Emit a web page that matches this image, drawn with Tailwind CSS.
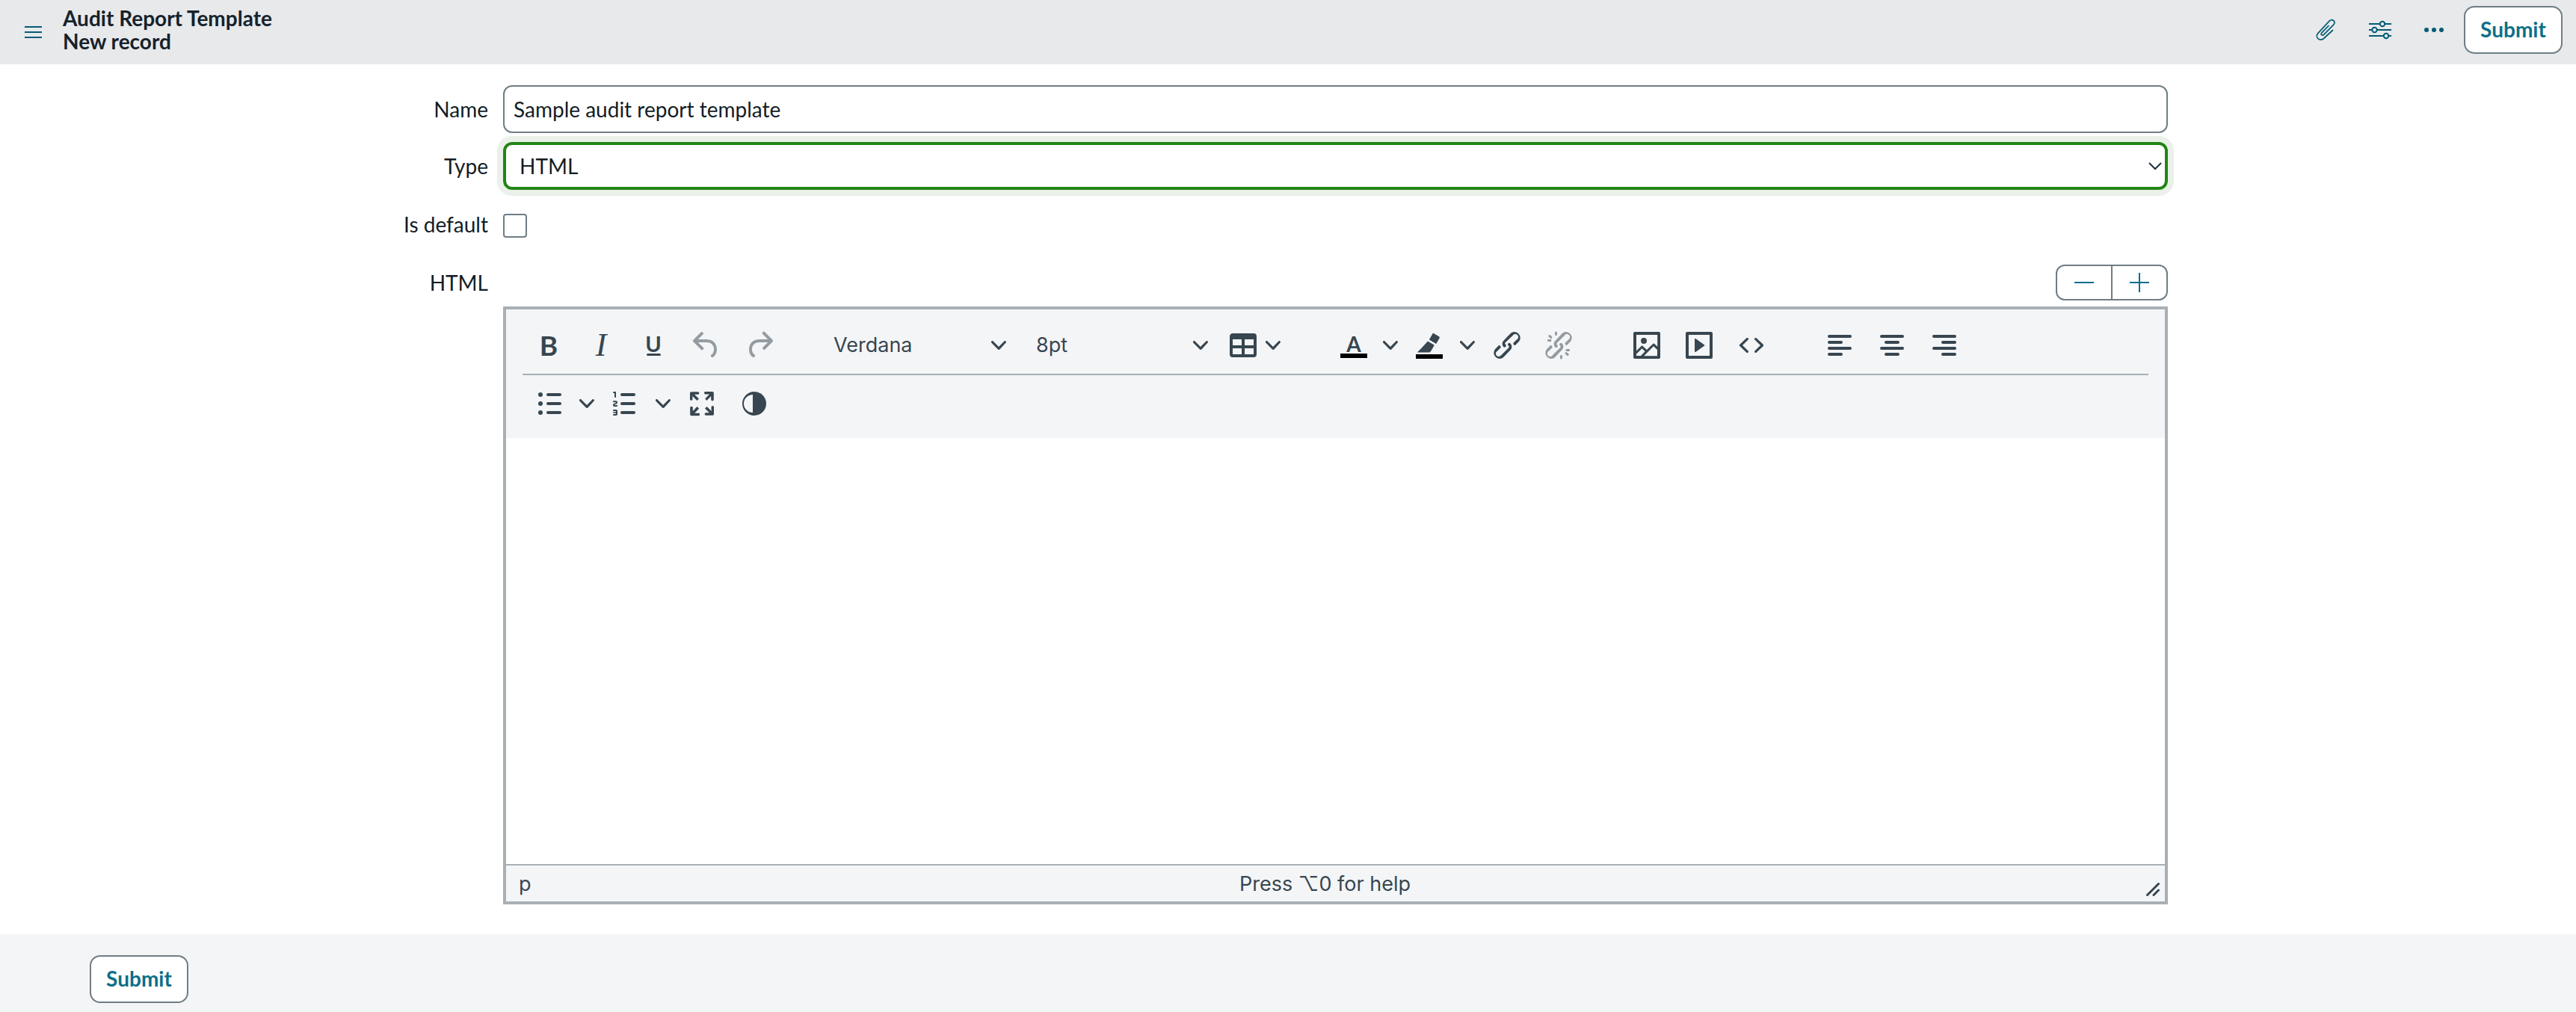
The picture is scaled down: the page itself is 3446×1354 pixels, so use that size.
<!DOCTYPE html>
<html lang="en">
<head>
  <meta charset="UTF-8" />
  <title>Audit Report Template - New record</title>
  <script src="https://cdn.jsdelivr.net/npm/@tailwindcss/browser@4"></script>
</head>
<body class="h-[1354px] overflow-hidden bg-white font-['Lato',sans-serif] text-[28px] leading-[40px] text-[#131d25] flex flex-col">

  <!-- header -->
  <header class="h-[86px] shrink-0 bg-[#e7e9eb] flex items-center">
    <svg class="ml-[33px] w-[23px] h-[16px] text-[#045c75]" viewBox="0 0 23 16" fill="currentColor"><rect y="0" width="23" height="2"/><rect y="7" width="23" height="2"/><rect y="14" width="23" height="2"/></svg>
    <div class="ml-[28px] font-bold text-[28px] leading-[31px] -mt-[7px] text-[#16222b]">
      <div>Audit Report Template</div>
      <div>New record</div>
    </div>
    <div class="ml-auto -mt-[7px] flex items-center text-[#045c75]">
      <svg class="w-[26px] h-[30px]" viewBox="0 0 26 30" fill="none" stroke="currentColor" stroke-width="1.7" stroke-linecap="round"><path d="M22.5 15.5 10.5 26.5c-2.5 2-5.7 2-7.7.2-2-2-2-5 .2-7.3L18 3.2c1.8-1.8 4.2-2 5.8-.6 1.5 1.6 1.3 4-.4 5.8L10.6 21.3c-1 1-2.2 1.1-3 .3-.7-.8-.5-2 .5-3L17 9.5"/></svg>
      <svg class="ml-[45px] w-[30px] h-[26px]" viewBox="0 0 30 26" fill="none" stroke="currentColor" stroke-width="2"><path d="M0 5h30M0 13h30M0 21h30"/><circle cx="18" cy="5" r="3.2" fill="#e7e9eb"/><circle cx="7.5" cy="13" r="3.2" fill="#e7e9eb"/><circle cx="23" cy="21" r="3.2" fill="#e7e9eb"/></svg>
      <svg class="ml-[44px] w-[26px] h-[8px]" viewBox="0 0 26 8" fill="currentColor"><circle cx="3" cy="4" r="3"/><circle cx="13" cy="4" r="3"/><circle cx="23" cy="4" r="3"/></svg>
      <button class="ml-[27px] mr-[18px] w-[132px] h-[64px] pb-[2px] rounded-[14px] border-2 border-[#6f7d85] bg-white font-bold text-[#0c6f88]">Submit</button>
    </div>
  </header>

  <!-- form -->
  <main class="flex-1 pt-[28px]">
    <div class="flex items-center h-[64px]">
      <label class="w-[653px] text-right">Name</label>
      <div class="ml-[20px] w-[2227px] h-[64px] rounded-[12px] border-2 border-[#6f7d85] pl-[12px] flex items-center">Sample audit report template</div>
    </div>
    <div class="flex items-center h-[64px] mt-[12px]">
      <label class="w-[653px] text-right">Type</label>
      <div class="ml-[20px] w-[2227px] h-[64px] rounded-[12px] border-4 border-[#228514] ring-8 ring-[#e9f1e8] pl-[18px] pr-[4px] flex items-center justify-between">
        HTML
        <svg class="w-[18px] h-[11px]" viewBox="0 0 18 11" fill="none" stroke="#22303a" stroke-width="2"><path d="M1 1l8 8 8-8"/></svg>
      </div>
    </div>
    <div class="flex items-center h-[32px] mt-[32px]">
      <label class="w-[653px] text-right -mt-[5px]">Is default</label>
      <div class="ml-[20px] w-[32px] h-[32px] rounded-[4px] border-2 border-[#6f7d85]"></div>
    </div>
    <div class="flex items-center h-[48px] mt-[36px]">
      <label class="w-[653px] text-right">HTML</label>
      <div class="ml-auto mr-[546px] w-[150px] h-[48px] rounded-[12px] border-2 border-[#6f7d85] flex text-[#006e8a]">
        <div class="flex-1 flex items-center justify-center border-r-2 border-[#6f7d85]">
          <svg class="w-[26px] h-[2px]" viewBox="0 0 26 2" fill="currentColor"><rect width="26" height="2"/></svg>
        </div>
        <div class="flex-1 flex items-center justify-center">
          <svg class="w-[26px] h-[26px]" viewBox="0 0 26 26" fill="currentColor"><rect y="12" width="26" height="2"/><rect x="12" width="2" height="26"/></svg>
        </div>
      </div>
    </div>

    <!-- editor -->
    <div class="ml-[673px] mt-[8px] w-[2227px] h-[800px] border-4 border-[#a8b0b5] flex flex-col text-[#374650]">
      <div class="bg-[#f4f5f7] h-[172px] shrink-0 px-[22px]">
        <div class="h-[88px] pt-[10px] border-b-2 border-[#a8b0b5] flex items-center fill-[#374650]">
          <div class="w-[70px] text-center font-bold text-[37px]">B</div>
          <div class="w-[70px] text-center italic font-['Liberation_Serif',serif] text-[44px]">I</div>
          <div class="w-[70px] flex flex-col items-center -mt-[2px]">
            <span class="text-[29px] leading-[26px] font-bold">U</span>
            <span class="w-[19px] h-[3px] bg-[#374650] rounded-sm"></span>
          </div>
          <svg class="w-[48px] h-[48px] ml-[12px] opacity-50" viewBox="0 0 24 24"><path d="M6.4 8H12c3.7 0 6.2 2 6.8 5.1.6 2.7-.4 5.6-2.3 6.8a1 1 0 01-1-1.8c1.1-.6 1.8-2.7 1.4-4.6-.5-2.1-2.1-3.5-4.9-3.5H6.4l3.3 3.3a1 1 0 11-1.4 1.4l-5-5a1 1 0 010-1.4l5-5a1 1 0 011.4 1.4L6.4 8z"/></svg>
          <svg class="w-[48px] h-[48px] ml-[23px] opacity-50" viewBox="0 0 24 24"><path d="M17.6 10H12c-2.8 0-4.4 1.4-4.9 3.5-.4 2 .3 4 1.4 4.6a1 1 0 11-1 1.8c-2-1.2-2.9-4.1-2.3-6.8.6-3 3-5.1 6.8-5.1h5.6l-3.3-3.3a1 1 0 111.4-1.4l5 5a1 1 0 010 1.4l-5 5a1 1 0 01-1.4-1.4l3.3-3.3z"/></svg>
          <div class="w-[211px] ml-[75px] font-['Inter',sans-serif] text-[27px]">Verdana</div>
          <svg class="w-[20px] h-[20px]" viewBox="0 0 10 10"><path d="M8.7 2.2c.3-.3.8-.3 1 0 .4.4.4.9 0 1.2L5.7 7.8c-.3.3-.9.3-1.2 0L.2 3.4a.8.8 0 010-1.2c.3-.3.8-.3 1.1 0L5 6l3.7-3.8z"/></svg>
          <div class="w-[209px] ml-[40px] font-['Inter',sans-serif] text-[27px]">8pt</div>
          <svg class="w-[20px] h-[20px] ml-[1px]" viewBox="0 0 10 10"><path d="M8.7 2.2c.3-.3.8-.3 1 0 .4.4.4.9 0 1.2L5.7 7.8c-.3.3-.9.3-1.2 0L.2 3.4a.8.8 0 010-1.2c.3-.3.8-.3 1.1 0L5 6l3.7-3.8z"/></svg>
          <svg class="w-[48px] h-[48px] ml-[23px]" viewBox="0 0 24 24"><path d="M19 4a2 2 0 012 2v12a2 2 0 01-2 2H5a2 2 0 01-2-2V6c0-1.1.9-2 2-2h14zM5 14v4h6v-4H5zm14 0h-6v4h6v-4zm0-6h-6v4h6V8zM5 12h6V8H5v4z"/></svg>
          <svg class="w-[20px] h-[20px] ml-[6px]" viewBox="0 0 10 10"><path d="M8.7 2.2c.3-.3.8-.3 1 0 .4.4.4.9 0 1.2L5.7 7.8c-.3.3-.9.3-1.2 0L.2 3.4a.8.8 0 010-1.2c.3-.3.8-.3 1.1 0L5 6l3.7-3.8z"/></svg>
          <div class="w-[36px] ml-[80px] flex flex-col items-center mt-[2px]">
            <span class="font-bold text-[28px] leading-[26px]">A</span>
            <span class="w-[36px] h-[6px] bg-black"></span>
          </div>
          <svg class="w-[20px] h-[20px] ml-[21px]" viewBox="0 0 10 10"><path d="M8.7 2.2c.3-.3.8-.3 1 0 .4.4.4.9 0 1.2L5.7 7.8c-.3.3-.9.3-1.2 0L.2 3.4a.8.8 0 010-1.2c.3-.3.8-.3 1.1 0L5 6l3.7-3.8z"/></svg>
          <svg class="w-[48px] h-[48px] ml-[18px]" viewBox="0 0 24 24"><path d="M14.7 3.9l3.8 2.2c.4.2.5.7.3 1.1l-2.2 3.8-4.7-2.7 2.2-3.8c.2-.4.3-.7.6-.6zM11 9.3l4.4 2.6-2.2 3.9-1 .9-.6.1H4l.4-.5 2.5-2.5z"/><rect x="3" y="18" width="18" height="3" fill="#000"/></svg>
          <svg class="w-[20px] h-[20px] ml-[17px]" viewBox="0 0 10 10"><path d="M8.7 2.2c.3-.3.8-.3 1 0 .4.4.4.9 0 1.2L5.7 7.8c-.3.3-.9.3-1.2 0L.2 3.4a.8.8 0 010-1.2c.3-.3.8-.3 1.1 0L5 6l3.7-3.8z"/></svg>
          <svg class="w-[48px] h-[48px] ml-[19px]" viewBox="0 0 24 24"><path d="M6.2 12.3a1 1 0 011.4 1.4l-2 2a2 2 0 102.6 2.8l4.8-4.8a1 1 0 000-1.4 1 1 0 111.4-1.3 2.9 2.9 0 010 4L9.6 20a3.9 3.9 0 01-5.5-5.5l2-2zm11.6-.6a1 1 0 01-1.4-1.4l2-2a2 2 0 10-2.6-2.8L11 10a1 1 0 000 1.4A1 1 0 119.6 13a2.9 2.9 0 010-4L14.4 4a3.9 3.9 0 015.5 5.5l-2 2z"/></svg>
          <svg class="w-[48px] h-[48px] ml-[21px] opacity-50" viewBox="0 0 24 24"><path d="M6.2 12.3a1 1 0 011.4 1.4l-2.1 2a2 2 0 102.7 2.7l4.8-4.8a1 1 0 000-1.3 1 1 0 111.4-1.4 2.9 2.9 0 010 4L9.6 20a3.9 3.9 0 01-5.5-5.5l2-2zm11.6-.6a1 1 0 01-1.4-1.3l2.1-2.1a2 2 0 10-2.7-2.7l-4.8 4.8a1 1 0 000 1.3 1 1 0 11-1.4 1.4 2.9 2.9 0 010-4L14.4 4a3.9 3.9 0 015.5 5.5l-2 2zM7.6 6.3a.8.8 0 01-1 1.1L5.3 6.2a.8.8 0 011.1-1.1l1.2 1.2zM5 9.5a.8.8 0 010-1.5h1.7a.8.8 0 010 1.5H5zm11.4 8.2a.8.8 0 011-1.1l1.3 1.2a.8.8 0 01-1.1 1.1l-1.2-1.2zm2.6-3.2a.8.8 0 010 1.5h-1.7a.8.8 0 010-1.5H19zM9.5 5V3.3a.8.8 0 011.5 0V5a.8.8 0 01-1.5 0zm5 14v1.7a.8.8 0 01-1.5 0V19a.8.8 0 011.5 0z"/></svg>
          <svg class="w-[48px] h-[48px] ml-[70px]" viewBox="0 0 24 24"><path d="M5 15.7l3.3-3.2c.3-.3.7-.3 1 0L12 15l4.1-4c.3-.4.8-.4 1 0l2 1.9V5H5v10.7zM5 18V19h3l2.8-2.9-2-2L5 17.9zm14-3l-2.5-2.4-6.4 6.5H19v-4zM4 3h16c.6 0 1 .4 1 1v16c0 .6-.4 1-1 1H4a1 1 0 01-1-1V4c0-.6.4-1 1-1zm6 8a2 2 0 100-4 2 2 0 000 4z"/></svg>
          <svg class="w-[48px] h-[48px] ml-[22px]" viewBox="0 0 24 24"><path d="M4 3h16c.6 0 1 .4 1 1v16c0 .6-.4 1-1 1H4a1 1 0 01-1-1V4c0-.6.4-1 1-1zm1 2v14h14V5H5zm4.8 2.6l5.6 4a.5.5 0 010 .8l-5.6 4A.5.5 0 019 16V8a.5.5 0 01.8-.4z"/></svg>
          <svg class="w-[48px] h-[48px] ml-[22px]" viewBox="0 0 24 24"><path d="M9.8 15.7c.3.3.3.8 0 1-.3.4-.9.4-1.2 0l-4.4-4.1a.8.8 0 010-1.2l4.4-4.2c.3-.3.9-.3 1.2 0 .3.3.3.8 0 1.1L6 12l3.8 3.7zm4.4 0L18 12l-3.8-3.7c-.3-.3-.3-.8 0-1.1.3-.3.9-.3 1.2 0l4.4 4.2c.3.3.3.9 0 1.2l-4.4 4.1c-.3.4-.9.4-1.2 0a.8.8 0 010-1z"/></svg>
          <svg class="w-[48px] h-[48px] ml-[70px]" viewBox="0 0 24 24"><rect x="4" y="5" width="16" height="2" rx="1"/><rect x="4" y="9" width="10" height="2" rx="1"/><rect x="4" y="13" width="16" height="2" rx="1"/><rect x="4" y="17" width="10" height="2" rx="1"/></svg>
          <svg class="w-[48px] h-[48px] ml-[22px]" viewBox="0 0 24 24"><rect x="4" y="5" width="16" height="2" rx="1"/><rect x="7" y="9" width="10" height="2" rx="1"/><rect x="4" y="13" width="16" height="2" rx="1"/><rect x="7" y="17" width="10" height="2" rx="1"/></svg>
          <svg class="w-[48px] h-[48px] ml-[22px]" viewBox="0 0 24 24"><rect x="4" y="5" width="16" height="2" rx="1"/><rect x="10" y="9" width="10" height="2" rx="1"/><rect x="4" y="13" width="16" height="2" rx="1"/><rect x="10" y="17" width="10" height="2" rx="1"/></svg>
        </div>
        <div class="h-[82px] pb-[6px] flex items-center fill-[#374650]">
          <svg class="w-[48px] h-[48px] ml-[12px]" viewBox="0 0 24 24"><path d="M11 5h8c.6 0 1 .4 1 1s-.4 1-1 1h-8a1 1 0 010-2zm0 6h8c.6 0 1 .4 1 1s-.4 1-1 1h-8a1 1 0 010-2zm0 6h8c.6 0 1 .4 1 1s-.4 1-1 1h-8a1 1 0 010-2z"/><circle cx="6" cy="6" r="1.5"/><circle cx="6" cy="12" r="1.5"/><circle cx="6" cy="18" r="1.5"/></svg>
          <svg class="w-[20px] h-[20px] ml-[16px]" viewBox="0 0 10 10"><path d="M8.7 2.2c.3-.3.8-.3 1 0 .4.4.4.9 0 1.2L5.7 7.8c-.3.3-.9.3-1.2 0L.2 3.4a.8.8 0 010-1.2c.3-.3.8-.3 1.1 0L5 6l3.7-3.8z"/></svg>
          <svg class="w-[48px] h-[48px] ml-[17px]" viewBox="0 0 24 24"><path d="M10 17h8c.6 0 1 .4 1 1s-.4 1-1 1h-8a1 1 0 010-2zm0-6h8c.6 0 1 .4 1 1s-.4 1-1 1h-8a1 1 0 010-2zm0-6h8c.6 0 1 .4 1 1s-.4 1-1 1h-8a1 1 0 110-2zM6 4v3.5c0 .3-.2.5-.5.5a.5.5 0 01-.5-.5V5h-.5a.5.5 0 010-1H6zm-1 8.8l.2.2h1.3c.3 0 .5.2.5.5s-.2.5-.5.5H4.9a1 1 0 01-.9-1V13c0-.4.3-.8.6-1l1.2-.4.2-.3a.2.2 0 00-.2-.2H4.5a.5.5 0 01-.5-.5c0-.3.2-.5.5-.5h1.6c.5 0 .9.4.9 1v.1c0 .4-.3.8-.6 1l-1.2.4-.2.3zM7 17v2c0 .6-.4 1-1 1H4.5a.5.5 0 010-1h1.2c.2 0 .3-.1.3-.3 0-.2-.1-.3-.3-.3H4.4a.4.4 0 110-.8h1.3c.2 0 .3-.1.3-.3 0-.2-.1-.3-.3-.3H4.5a.5.5 0 110-1H6c.6 0 1 .4 1 1z"/></svg>
          <svg class="w-[20px] h-[20px] ml-[17px]" viewBox="0 0 10 10"><path d="M8.7 2.2c.3-.3.8-.3 1 0 .4.4.4.9 0 1.2L5.7 7.8c-.3.3-.9.3-1.2 0L.2 3.4a.8.8 0 010-1.2c.3-.3.8-.3 1.1 0L5 6l3.7-3.8z"/></svg>
          <svg class="w-[48px] h-[48px] ml-[18px]" viewBox="0 0 24 24"><path d="M15.3 10l-1.2-1.3 2.9-3h-2.3a.9.9 0 110-1.7H19c.5 0 .9.4.9.9v4.4a.9.9 0 11-1.8 0V7l-2.9 3zm0 4l3 3v-2.3a.9.9 0 111.7 0V19c0 .5-.4.9-.9.9h-4.4a.9.9 0 110-1.8H17l-3-2.9 1.3-1.2zM10 15.4l-2.9 3h2.3a.9.9 0 110 1.7H5a.9.9 0 01-.9-.9v-4.4a.9.9 0 111.8 0V17l2.9-3 1.2 1.3zM8.7 10L5.7 7v2.3a.9.9 0 01-1.7 0V5c0-.5.4-.9.9-.9h4.4a.9.9 0 010 1.8H7l3 2.9-1.3 1.2z"/></svg>
          <svg class="w-[48px] h-[48px] ml-[22px]" viewBox="0 0 24 24" fill-rule="evenodd"><path d="M12 4a8 8 0 1 0 0 16a8 8 0 0 0 0-16zM11 6a6 6 0 0 0 0 12z"/></svg>
        </div>
      </div>
      <div class="flex-1 bg-white"></div>
      <div class="relative h-[50px] shrink-0 bg-[#f4f5f7] border-t-2 border-[#a8b0b5] pl-[17px] pt-[2px] flex items-center font-['Inter',sans-serif] text-[27px]">
        <span>p</span>
        <span class="absolute left-[981px]">Press ⌥0 for help</span>
        <svg class="absolute right-[7px] bottom-[7px] w-[18px] h-[18px]" viewBox="0 0 18 18" fill="none" stroke="#374650" stroke-width="3" stroke-linecap="round"><path d="M1.5 16.5l15-15M10 16.5l6.5-6.5"/></svg>
      </div>
    </div>
  </main>

  <!-- footer -->
  <footer class="h-[104px] shrink-0 bg-[#f4f5f7] pt-[28px] pl-[120px]">
    <button class="w-[132px] h-[64px] pb-[2px] rounded-[14px] border-2 border-[#6f7d85] bg-white font-bold text-[#0c6f88]">Submit</button>
  </footer>
</body>
</html>
